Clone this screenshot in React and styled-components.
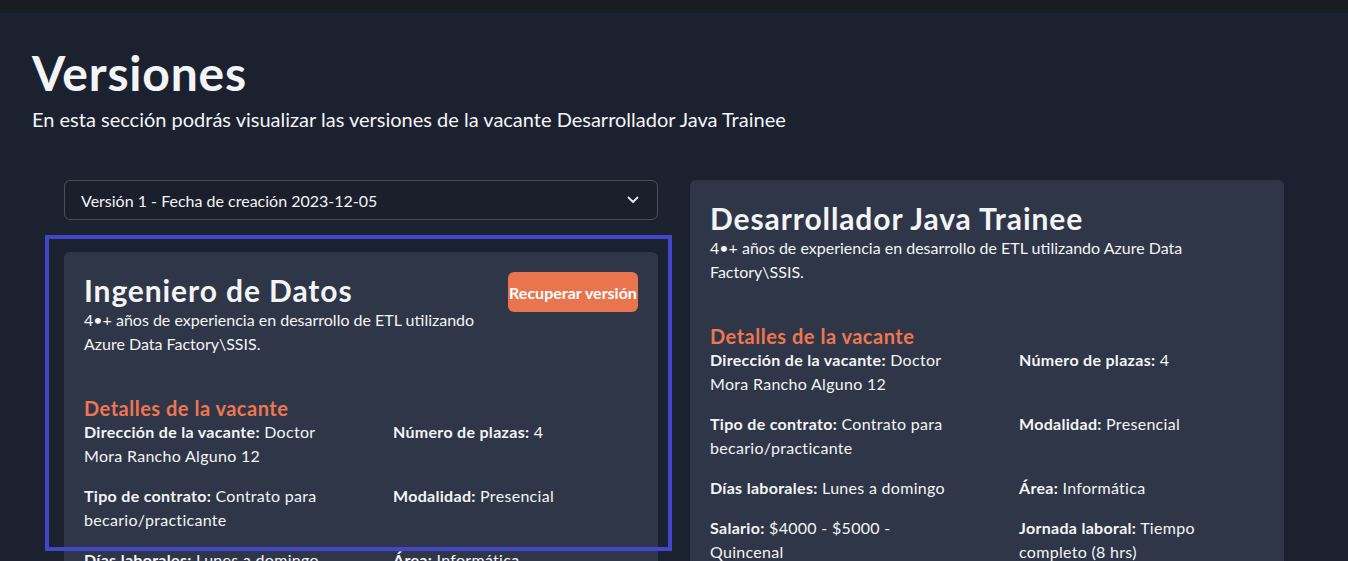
import React from 'react';
import styled, { createGlobalStyle } from 'styled-components';

const GlobalStyle = createGlobalStyle`
  body {
    margin: 0;
    background: #1c2130;
    color: #f3f4f6;
    font-family: Lato, 'Open Sans', sans-serif;
  }
`;

const TopStrip = styled.div`
  height: 13px;
  background: #191c23;
`;

const Main = styled.main`
  padding: 0 32px;
  height: 548px;
  overflow: hidden;
`;

const Title = styled.h1`
  margin: 36px 0 0;
  font-size: 48px;
  line-height: 48px;
  font-weight: 700;
  letter-spacing: 0.8px;
`;

const Subtitle = styled.p`
  margin: 8px 0 0;
  font-size: 20px;
  line-height: 28px;
`;

const Columns = styled.section`
  display: grid;
  grid-template-columns: 1fr 1fr;
  gap: 32px;
  align-items: start;
  padding: 0 32px;
  margin-top: 47px;
`;

const LeftColumn = styled.div`
  position: relative;
  display: flex;
  flex-direction: column;
  gap: 32px;
`;

const SelectBox = styled.div`
  height: 40px;
  box-sizing: border-box;
  display: flex;
  align-items: center;
  justify-content: space-between;
  padding: 0 18px 0 16px;
  border: 1px solid #4a4f5c;
  border-radius: 6px;
  background: #1a1f2b;
  font-size: 16px;
`;

const Highlight = styled.div`
  position: absolute;
  left: -19px;
  top: 55px;
  width: 627px;
  height: 316px;
  box-sizing: border-box;
  border: 4px solid #4346c9;
  pointer-events: none;
`;

const Card = styled.article`
  background: #2e3647;
  border-radius: 6px;
  padding: 20px;
`;

const CardHeader = styled.div`
  display: flex;
  justify-content: space-between;
  align-items: flex-start;
  gap: 16px;
`;

const HeaderText = styled.div`
  flex: 1;
`;

const CardTitle = styled.h2`
  margin: 0;
  font-size: 30px;
  line-height: 36px;
  font-weight: 700;
  letter-spacing: 0.9px;
`;

const Description = styled.p`
  margin: 0;
  font-size: 16px;
  line-height: 24px;
`;

const RecoverButton = styled.button`
  flex-shrink: 0;
  width: 130px;
  height: 40px;
  padding: 0;
  border: none;
  border-radius: 6px;
  background: #e9754e;
  color: #ffffff;
  font-family: inherit;
  font-size: 16px;
  font-weight: 700;
  white-space: nowrap;
  cursor: pointer;
`;

const SectionHeading = styled.h3`
  margin: 40px 0 0;
  color: #ee7650;
  font-size: 20px;
  line-height: 24px;
  font-weight: 700;
  letter-spacing: 0.5px;
`;

const DetailGrid = styled.div`
  display: grid;
  grid-template-columns: 1fr 1fr;
  column-gap: 64px;
  row-gap: 16px;
`;

const Detail = styled.p`
  margin: 0;
  font-size: 16px;
  line-height: 24px;
  letter-spacing: 0.3px;

  strong {
    font-weight: 700;
  }
`;

const details = [
  ['Dirección de la vacante:', 'Doctor Mora Rancho Alguno 12'],
  ['Número de plazas:', '4'],
  ['Tipo de contrato:', 'Contrato para becario/practicante'],
  ['Modalidad:', 'Presencial'],
  ['Días laborales:', 'Lunes a domingo'],
  ['Área:', 'Informática'],
  ['Salario:', '$4000 - $5000 - Quincenal'],
  ['Jornada laboral:', 'Tiempo completo (8 hrs)'],
];

const description = '4•+ años de experiencia en desarrollo de ETL utilizando Azure Data Factory\\SSIS.';

const Chevron = () => (
  <svg width="12" height="8" viewBox="0 0 12 8" fill="none">
    <path d="M1.5 1.5 6 6l4.5-4.5" stroke="#e5e7eb" strokeWidth="1.8" strokeLinecap="round" strokeLinejoin="round" />
  </svg>
);

const Details = () => (
  <>
    <SectionHeading>Detalles de la vacante</SectionHeading>
    <DetailGrid>
      {details.map(([label, value]) => (
        <Detail key={label}>
          <strong>{label}</strong> {value}
        </Detail>
      ))}
    </DetailGrid>
  </>
);

export default function App() {
  return (
    <>
      <GlobalStyle />
      <TopStrip />
      <Main>
        <Title>Versiones</Title>
        <Subtitle>En esta sección podrás visualizar las versiones de la vacante Desarrollador Java Trainee</Subtitle>
        <Columns>
          <LeftColumn>
            <SelectBox>
              <span>Versión 1 - Fecha de creación 2023-12-05</span>
              <Chevron />
            </SelectBox>
            <Card>
              <CardHeader>
                <HeaderText>
                  <CardTitle>Ingeniero de Datos</CardTitle>
                  <Description>{description}</Description>
                </HeaderText>
                <RecoverButton>Recuperar versión</RecoverButton>
              </CardHeader>
              <Details />
            </Card>
            <Highlight />
          </LeftColumn>
          <Card>
            <CardTitle>Desarrollador Java Trainee</CardTitle>
            <Description>{description}</Description>
            <Details />
          </Card>
        </Columns>
      </Main>
    </>
  );
}
